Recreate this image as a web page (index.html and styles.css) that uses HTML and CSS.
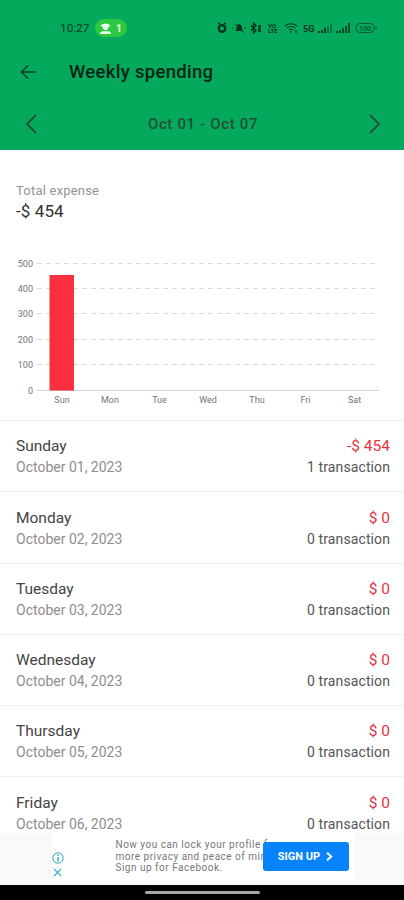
FILE: index.html
```
<!DOCTYPE html>
<html lang="en">
<head>
    <meta charset="utf-8">
    <title>Weekly spending</title>
    <link rel="stylesheet" href="styles.css">
</head>
<body>
<div class="main-wrapper">
    <div class="header">
        <div class="status-bar">
            <span class="status-time">10:27</span>
            <span class="hotspot">
                <svg width="11" height="11" viewBox="0 0 11 11" fill="#e9fbe9"><path d="M.5 2.500Q5.500-1.500 10.500 2.500L8.500 4.200Q8 7 5.500 7T2.500 4.200Z"/><path d="M0 11Q0 8.300 3 8.300H8Q11 8.300 11 11Z"/></svg>
                <span>1</span>
            </span>
            <svg class="status-icons" width="160" height="12" viewBox="0 0 160 12" fill="none" stroke="#05351e">
                <!-- alarm -->
                <circle cx="5" cy="6.500" r="3.300" stroke-width="2.400"/><path d="M1 2L3 1M9 2L7 1" stroke-width="1.500"/>
                <!-- muted bell -->
                <path d="M18 9Q19.500 8 19.500 5Q20 2 22 2T25 5Q25 8 26 9Z" fill="#05351e" stroke="none"/><path d="M18 2L27 10.500M15 6H16.500M27.500 6H29" stroke-width="1"/>
                <!-- bluetooth -->
                <path d="M34 3.500L39 8.500L36.500 11V1L39 3.500L34 8.500" stroke-width="1.300"/><path d="M42.500 3V10" stroke-width="2.500"/>
                <!-- wifi -->
                <path d="M68 4Q74 -.5 80 4M70 6Q74 3 78 6M72 8Q74 6.500 76 8M74 9V10.500M79 8V11" stroke-width="1.200"/>
                <!-- signal -->
                <path d="M102 9V11M105 8V11M108 6V11" stroke-width="1.800"/><path d="M111 4V11M114 2V11" stroke-width="1.500" opacity=".6"/>
                <path d="M120 9V11M123 8V11M126 6V11M129 4V11M132 1V11" stroke-width="1.600"/>
                <!-- battery -->
                <rect x="139" y="1.500" width="18" height="9" rx="4" opacity=".65"/><path d="M159 4.500V7.500" opacity=".65"/>
                <g class="status-text" fill="#05351e" stroke="none">
                    <text x="51" y="5.500">VO</text><text x="51" y="11">LTE</text>
                    <text class="net" x="86" y="9.500">5G</text>
                    <text class="battery" x="142" y="8.500">100</text>
                </g>
            </svg>
        </div>
        <div class="title-bar">
            <svg width="16" height="16" viewBox="0 0 16 16" fill="none" stroke="#0b3d22" stroke-width="1.500"><path d="M15.500 8H1.500M8 1.500L1.500 8L8 14.500"/></svg>
            <h1 class="title">Weekly spending</h1>
        </div>
        <div class="week-bar">
            <svg width="12" height="20" viewBox="0 0 12 20" fill="none" stroke="#23502f" stroke-width="1.800"><path d="M11 1L2 10L11 19"/></svg>
            <span class="week-range">Oct 01 - Oct 07</span>
            <svg width="12" height="20" viewBox="0 0 12 20" fill="none" stroke="#23502f" stroke-width="1.800"><path d="M1 1L10 10L1 19"/></svg>
        </div>
    </div>

    <div class="summary">
        <div class="summary-label">Total expense</div>
        <div class="summary-total">-$ 454</div>
    </div>

    <svg class="chart" width="404" height="165" viewBox="0 0 404 165">
        <g class="grid">
            <path d="M37 8.500H379M37 33.500H379M37 58.500H379M37 84.500H379M37 109.500H379"/>
        </g>
        <path class="axis" d="M37 135.500H379"/>
        <rect class="bar" x="49.500" y="20" width="24.500" height="115.500"/>
        <g class="y-labels">
            <text x="33" y="11.500">500</text>
            <text x="33" y="36.500">400</text>
            <text x="33" y="62">300</text>
            <text x="33" y="87.500">200</text>
            <text x="33" y="113">100</text>
            <text x="33" y="138.500">0</text>
        </g>
        <g class="x-labels">
            <text x="62" y="148">Sun</text>
            <text x="110" y="148">Mon</text>
            <text x="159.500" y="148">Tue</text>
            <text x="208" y="148">Wed</text>
            <text x="257" y="148">Thu</text>
            <text x="305.500" y="148">Fri</text>
            <text x="354.500" y="148">Sat</text>
        </g>
    </svg>

    <ul class="day-list">
        <li class="day-item">
            <div><div class="day-name">Sunday</div><div class="day-date">October 01, 2023</div></div>
            <div class="day-right"><div class="day-amount">-$ 454</div><div class="day-count">1 transaction</div></div>
        </li>
        <li class="day-item">
            <div><div class="day-name">Monday</div><div class="day-date">October 02, 2023</div></div>
            <div class="day-right"><div class="day-amount">$ 0</div><div class="day-count">0 transaction</div></div>
        </li>
        <li class="day-item">
            <div><div class="day-name">Tuesday</div><div class="day-date">October 03, 2023</div></div>
            <div class="day-right"><div class="day-amount">$ 0</div><div class="day-count">0 transaction</div></div>
        </li>
        <li class="day-item">
            <div><div class="day-name">Wednesday</div><div class="day-date">October 04, 2023</div></div>
            <div class="day-right"><div class="day-amount">$ 0</div><div class="day-count">0 transaction</div></div>
        </li>
        <li class="day-item">
            <div><div class="day-name">Thursday</div><div class="day-date">October 05, 2023</div></div>
            <div class="day-right"><div class="day-amount">$ 0</div><div class="day-count">0 transaction</div></div>
        </li>
        <li class="day-item">
            <div><div class="day-name">Friday</div><div class="day-date">October 06, 2023</div></div>
            <div class="day-right"><div class="day-amount">$ 0</div><div class="day-count">0 transaction</div></div>
        </li>
    </ul>

    <div class="ad">
        <div class="ad-box">
            <div class="ad-icons">
                <svg width="12" height="12" viewBox="0 0 12 12" fill="none" stroke="#2fa9c9"><circle cx="6" cy="6" r="5.200"/><path d="M6 5V9.500M6 2.500V4" stroke-width="1.400"/></svg>
                <svg width="9" height="9" viewBox="0 0 10 10" fill="none" stroke="#2fa9c9" stroke-width="1.400"><path d="M1 1L9 9M9 1L1 9"/></svg>
            </div>
            <div class="ad-text">Now you can lock your profile for<br>more privacy and peace of mind.<br>Sign up for Facebook.</div>
            <button class="btn-signup">SIGN UP
                <svg width="7" height="9" viewBox="0 0 7 9" fill="none" stroke="#fff" stroke-width="2"><path d="M1 .8L5.200 4.500L1 8.200"/></svg>
            </button>
        </div>
    </div>
    <div class="nav-bar"><div class="nav-handle"></div></div>
</div>
</body>
</html>
```
FILE: styles.css
```
*{
    box-sizing: border-box;
}
body{
    margin: 0;
    font-family: Roboto, "Liberation Sans", sans-serif;
    background: #fff;
}
.main-wrapper{
    display: flex;
    flex-direction: column;
    width: 404px;
    height: 900px;
    overflow: hidden;
}

/* header */
.header{
    flex: none;
    height: 150px;
    padding-top: 16px;
    background: #04a95c;
}
.status-bar{
    display: flex;
    align-items: center;
    height: 24px;
    padding-left: 60px;
}
.status-time{
    width: 35px;
    font-size: 11.8px;
    color: #06391f;
}
.hotspot{
    display: flex;
    align-items: center;
    justify-content: center;
    gap: 5px;
    width: 32px;
    height: 18px;
    border-radius: 9px;
    background: #2bc840;
    color: #e9fbe9;
    font-size: 11px;
    font-weight: 700;
}
.status-icons{
    margin-left: 90px;
}
.status-text{
    font-size: 6px;
    font-weight: 700;
}
.status-text .net{
    font-size: 9px;
}
.status-text .battery{
    font-size: 7px;
    opacity: .7;
}
.title-bar{
    display: flex;
    align-items: center;
    gap: 33px;
    height: 64px;
    padding-left: 20px;
}
.title{
    margin: 0;
    font-size: 18.5px;
    font-weight: 500;
    letter-spacing: .3px;
    color: #052515;
}
.week-bar{
    display: flex;
    align-items: center;
    justify-content: space-between;
    height: 40px;
    padding: 0 23px 0 25px;
}
.week-range{
    font-size: 15px;
    font-weight: 500;
    letter-spacing: .65px;
    color: #23502f;
}

/* total */
.summary{
    flex: none;
    height: 105px;
    padding: 31px 16px 0;
}
.summary-label{
    font-size: 13px;
    line-height: 20px;
    letter-spacing: .2px;
    color: #949494;
}
.summary-total{
    font-size: 17px;
    line-height: 21px;
    letter-spacing: .1px;
    color: #333;
}

/* chart */
.chart{
    flex: none;
    display: block;
}
.grid{
    fill: none;
    stroke: #dadada;
    stroke-dasharray: 5 4;
}
.axis{
    stroke: #d4d4d4;
}
.bar{
    fill: #fa3040;
}
.y-labels, .x-labels{
    font-size: 9px;
    fill: #757575;
}
.y-labels{
    text-anchor: end;
}
.x-labels{
    text-anchor: middle;
}

/* days */
.day-list{
    flex: none;
    height: 413px;
    margin: 0;
    padding: 0;
    overflow: hidden;
    list-style: none;
}
.day-item{
    display: flex;
    justify-content: space-between;
    height: 71.25px;
    padding: 15.300px 14px 0 16px;
    border-top: 1px solid #f0f0f0;
}
.day-name, .day-amount{
    font-size: 15.5px;
    line-height: 21px;
    color: #444;
}
.day-date, .day-count{
    font-size: 14px;
    line-height: 20px;
    color: #8e8e8e;
}
.day-right{
    text-align: right;
}
.day-amount{
    color: #e23542;
}
.day-count{
    letter-spacing: .1px;
    color: #555;
}

/* ad */
.ad{
    flex: none;
    display: flex;
    justify-content: center;
    height: 52px;
    background: #f9f9f9;
}
.ad-box{
    position: relative;
    display: flex;
    width: 303px;
    height: 47px;
    margin-left: 2px;
    background: #fff;
}
.ad-icons{
    display: flex;
    flex-direction: column;
    align-items: center;
    gap: 4px;
    width: 12px;
    padding-top: 19px;
}
.ad-text{
    margin-left: 52px;
    padding-top: 6px;
    font-size: 10px;
    line-height: 11.5px;
    letter-spacing: .5px;
    white-space: nowrap;
    color: #777;
}
/* button lies over the end of the text */
.btn-signup{
    position: absolute;
    top: 9px;
    right: 6px;
    display: flex;
    align-items: center;
    justify-content: center;
    gap: 6px;
    width: 86px;
    height: 29px;
    padding: 0;
    border: 0;
    border-radius: 3px;
    background: #0783fb;
    color: #fff;
    font-family: inherit;
    font-size: 11px;
    font-weight: 700;
}

.nav-bar{
    flex: none;
    height: 15px;
    padding-top: 6px;
    background: #000;
}
.nav-handle{
    width: 115px;
    height: 3px;
    margin: 0 auto;
    border-radius: 2px;
    background: #a5a5a5;
}
```
